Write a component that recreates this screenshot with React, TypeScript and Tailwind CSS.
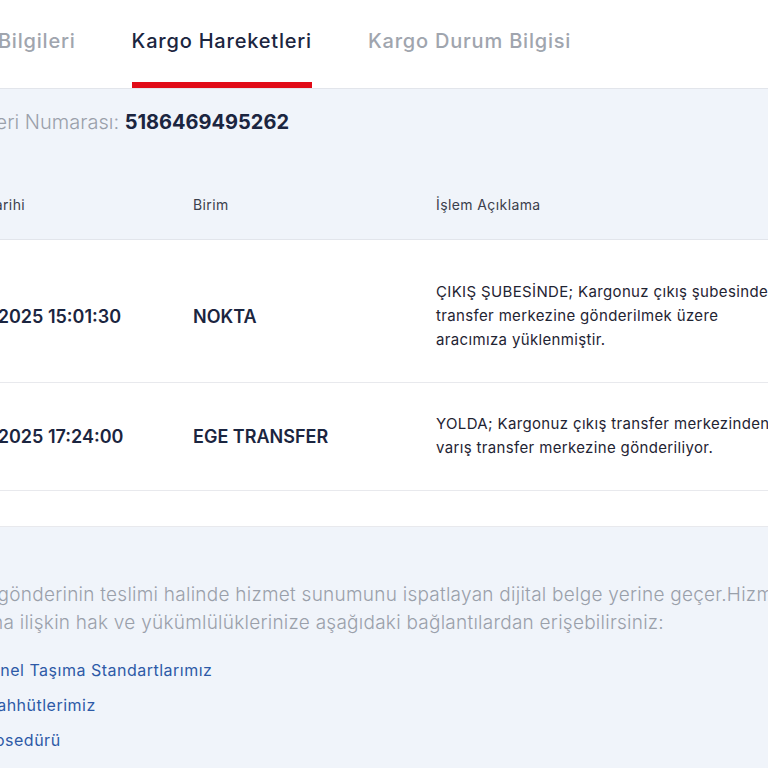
import React from 'react';

type Movement = {
  date: string;
  unit: string;
  lines: string[];
};

const movements: Movement[] = [
  {
    date: '12.03.2025 15:01:30',
    unit: 'NOKTA',
    lines: [
      'ÇIKIŞ ŞUBESİNDE; Kargonuz çıkış şubesinden',
      'transfer merkezine gönderilmek üzere',
      'aracımıza yüklenmiştir.',
    ],
  },
  {
    date: '12.03.2025 17:24:00',
    unit: 'EGE TRANSFER',
    lines: ['YOLDA; Kargonuz çıkış transfer merkezinden', 'varış transfer merkezine gönderiliyor.'],
  },
];

const links = ['Genel Taşıma Standartlarımız', 'Taahhütlerimiz', 'Prosedürü'];

export default function App() {
  return (
    <div className="w-[768px] h-[768px] overflow-hidden bg-[#f0f4fa] font-['Inter',sans-serif] text-[#1b2540]">
      <div className="w-[1100px] ml-[-55px]">
        {/* tabs */}
        <div className="bg-white h-[89px] border-b border-[#e2e5eb]">
          <div className="flex h-full gap-[56px] ml-[-35px] text-[20px] font-medium tracking-[0.8px]">
            <div className="h-full flex items-center border-b-[6px] border-transparent text-[#a0a5ae]">Gönderi Bilgileri</div>
            <div className="h-full flex items-center border-b-[6px] border-[#e10b17] text-[#1b2540]">Kargo Hareketleri</div>
            <div className="h-full flex items-center border-b-[6px] border-transparent text-[#a0a5ae]">Kargo Durum Bilgisi</div>
          </div>
        </div>

        <div className="pt-[21px] text-[20px] leading-[24px]">
          <span className="font-light text-[#9aa0aa]">Gönderi Numarası: </span>
          <span className="font-bold text-[#1b2540]">5186469495262</span>
        </div>

        {/* movements table */}
        <div className="mt-[36px]">
          <div className="grid grid-cols-[248px_243px_1fr] h-[70px] items-center border-b border-[#e2e5eb] text-[14px] tracking-[0.4px] text-[#3b404c]">
            <div>İşlem Tarihi</div>
            <div>Birim</div>
            <div>İşlem Açıklama</div>
          </div>
          <div className="bg-white pt-[11px]">
            {movements.map((m) => (
              <div
                key={m.date}
                className="grid grid-cols-[248px_243px_1fr] items-center pt-[29px] pb-[30px] border-b border-[#e8e9ed]"
              >
                <div className="text-[18px] font-semibold">{m.date}</div>
                <div className="text-[18px] font-semibold">{m.unit}</div>
                <div className="text-[15px] leading-[24px] tracking-[0.35px] text-[#1f2433]">
                  {m.lines.map((l) => (
                    <div key={l} className="whitespace-nowrap">{l}</div>
                  ))}
                </div>
              </div>
            ))}
            <div className="h-[36px] border-b border-[#e8e9ed]" />
          </div>
        </div>

        {/* footer note */}
        <div className="pt-[54px] ml-[23px]">
          <div className="text-[19px] leading-[28px] font-light tracking-[0.25px] text-[#9aa0aa] whitespace-nowrap">
            <div>Bu gönderinin teslimi halinde hizmet sunumunu ispatlayan dijital belge yerine geçer.Hizmetlerimize</div>
            <div>Buna ilişkin hak ve yükümlülüklerinize aşağıdaki bağlantılardan erişebilirsiniz:</div>
          </div>
          <ul className="mt-[22px] pl-[10px] flex flex-col gap-[13px] text-[16px] leading-[22px] tracking-[0.5px] text-[#2d5aa7]">
            {links.map((l) => (
              <li key={l}>
                <a href="#" className="whitespace-nowrap">{l}</a>
              </li>
            ))}
          </ul>
        </div>
      </div>
    </div>
  );
}
